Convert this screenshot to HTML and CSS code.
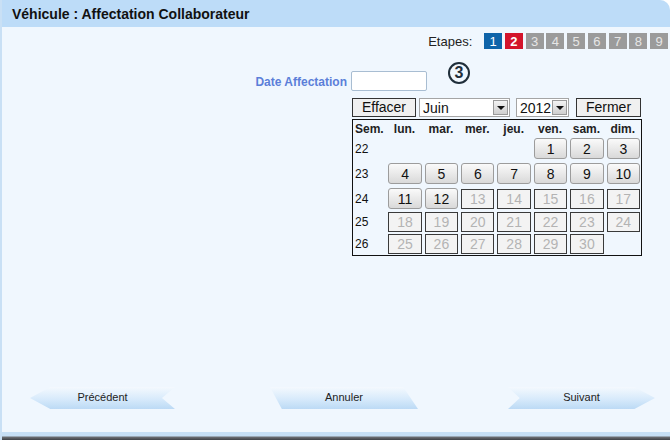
FILE: index.html
```html
<!DOCTYPE html>
<html lang="fr">
<head>
<meta charset="utf-8">
<title>Véhicule : Affectation Collaborateur</title>
<link rel="stylesheet" href="styles.css">
</head>
<body>
<div class="window">
  <div class="titlebar">Véhicule : Affectation Collaborateur</div>
  <div class="content">
    <div class="steps">
      <span class="steps-label">Etapes:</span>
      <span class="step step-done">1</span>
      <span class="step step-current">2</span>
      <span class="step">3</span>
      <span class="step">4</span>
      <span class="step">5</span>
      <span class="step">6</span>
      <span class="step">7</span>
      <span class="step">8</span>
      <span class="step">9</span>
    </div>
    <div class="field-row">
      <label class="field-label">Date Affectation</label>
      <input class="field-input" type="text">
      <span class="circle-num">3</span>
    </div>
    <div class="calendar">
      <div class="cal-top">
        <button class="cal-btn btn-clear">Effacer</button>
        <div class="cal-select sel-month"><span>Juin</span><span class="sel-arrow"></span></div>
        <div class="cal-select sel-year"><span>2012</span><span class="sel-arrow"></span></div>
        <button class="cal-btn btn-close">Fermer</button>
      </div>
      <table class="cal-table">
        <thead>
          <tr><th class="wk">Sem.</th><th>lun.</th><th>mar.</th><th>mer.</th><th>jeu.</th><th>ven.</th><th>sam.</th><th>dim.</th></tr>
        </thead>
        <tbody>
          <tr><td class="wk">22</td><td></td><td></td><td></td><td></td><td><span class="day">1</span></td><td><span class="day">2</span></td><td><span class="day">3</span></td></tr>
          <tr><td class="wk">23</td><td><span class="day">4</span></td><td><span class="day">5</span></td><td><span class="day">6</span></td><td><span class="day">7</span></td><td><span class="day">8</span></td><td><span class="day">9</span></td><td><span class="day">10</span></td></tr>
          <tr><td class="wk">24</td><td><span class="day">11</span></td><td><span class="day">12</span></td><td><span class="day off">13</span></td><td><span class="day off">14</span></td><td><span class="day off">15</span></td><td><span class="day off">16</span></td><td><span class="day off">17</span></td></tr>
          <tr class="row-off"><td class="wk">25</td><td><span class="day off">18</span></td><td><span class="day off">19</span></td><td><span class="day off">20</span></td><td><span class="day off">21</span></td><td><span class="day off">22</span></td><td><span class="day off">23</span></td><td><span class="day off">24</span></td></tr>
          <tr class="row-off"><td class="wk">26</td><td><span class="day off">25</span></td><td><span class="day off">26</span></td><td><span class="day off">27</span></td><td><span class="day off">28</span></td><td><span class="day off">29</span></td><td><span class="day off">30</span></td><td></td></tr>
        </tbody>
      </table>
    </div>
    <div class="nav">
      <div class="nav-btn nav-prev">Précédent</div>
      <div class="nav-btn nav-cancel">Annuler</div>
      <div class="nav-btn nav-next">Suivant</div>
    </div>
  </div>
  <div class="bottom-band"></div>
</div>
</body>
</html>
```
FILE: styles.css
```css
html, body {
  margin: 0;
  padding: 0;
  background: #ffffff;
}
body {
  font-family: "Liberation Sans", Arial, sans-serif;
  color: #111;
}
.window {
  width: 670px;
  height: 440px;
  display: flex;
  flex-direction: column;
  background: #f0f7fe;
  border-top-right-radius: 10px;
  overflow: hidden;
  box-sizing: border-box;
  border-left: 2px solid #c9e0f5;
}
.titlebar {
  height: 27px;
  line-height: 28px;
  background: #bddcf8;
  font-weight: bold;
  font-size: 14px;
  padding-left: 10px;
  color: #111;
}
.content {
  flex: 1;
  display: flex;
  flex-direction: column;
}
.steps {
  display: flex;
  justify-content: flex-end;
  align-items: center;
  gap: 2.75px;
  padding-top: 6px;
  padding-right: 2px;
  height: 16px;
}
.steps-label {
  font-size: 13px;
  color: #222;
  margin-right: 9px;
}
.step {
  width: 18px;
  height: 16px;
  line-height: 17px;
  text-align: center;
  font-size: 13px;
  color: #e6e6e6;
  background: #9b9b9b;
}
.step-done { background: #0f64a9; color: #fff; }
.step-current { background: #d3152c; color: #fff; font-weight: bold; }
.field-row {
  display: flex;
  align-items: flex-start;
  margin-top: 13px;
  height: 36px;
}
.field-label {
  width: 345px;
  text-align: right;
  font-size: 12px;
  font-weight: bold;
  color: #5b7fd9;
  margin-top: 13px;
}
.field-input {
  margin: 9px 0 0 4px;
  width: 76px;
  height: 20px;
  box-sizing: border-box;
  border: 1px solid #a8bdd2;
  border-radius: 2px;
  background: #fff;
  padding: 0;
}
.circle-num {
  margin-left: 21px;
  width: 22px;
  height: 22px;
  box-sizing: border-box;
  border: 2px solid #1f2e3a;
  border-radius: 50%;
  text-align: center;
  font-weight: bold;
  font-size: 16px;
  line-height: 18px;
  color: #1f2e3a;
}
.calendar {
  margin-left: 350px;
  width: 290px;
}
.cal-top {
  display: flex;
  align-items: center;
  height: 19px;
}
.cal-btn {
  font-family: "Liberation Sans", Arial, sans-serif;
  font-size: 14px;
  height: 19px;
  padding: 0;
  background: #f0f0f0;
  border: 1px solid #333;
  color: #111;
  line-height: 17px;
}
.btn-clear { width: 64px; }
.btn-close { width: 65px; margin-left: 7px; }
.cal-select {
  height: 19px;
  box-sizing: border-box;
  background: #fff;
  border: 1px solid #a5a5a5;
  display: flex;
  align-items: center;
  justify-content: space-between;
  font-size: 14px;
  padding-left: 3px;
  padding-right: 1px;
}
.sel-month { width: 91px; margin-left: 3px; }
.sel-year { width: 53px; margin-left: 6px; }
.sel-arrow {
  width: 15px;
  height: 15px;
  box-sizing: border-box;
  border: 1px solid #9a9a9a;
  background: linear-gradient(#f3f3f3, #cfcfcf);
  position: relative;
}
.sel-arrow::after {
  content: "";
  position: absolute;
  left: 3px;
  top: 5px;
  border-left: 4px solid transparent;
  border-right: 4px solid transparent;
  border-top: 4px solid #111;
}
.cal-table {
  margin-top: 2px;
  border: 1px solid #111;
  border-collapse: separate;
  border-spacing: 0;
  width: 290px;
}
.cal-table th {
  font-size: 12px;
  font-weight: bold;
  color: #222;
  height: 15px;
  padding: 1px 0 0;
  text-align: center;
  width: 36px;
}
.cal-table th.wk, .cal-table td.wk {
  width: 30px;
  text-align: left;
  padding-left: 2px;
  font-size: 12px;
}
.cal-table td {
  padding: 2px 1px 2px 2px;
  height: 21px;
  font-size: 12px;
  color: #111;
}
.cal-table tr.row-off td {
  padding-top: 1px;
  padding-bottom: 1px;
  height: 20px;
}
.day {
  display: block;
  height: 21px;
  line-height: 20px;
  box-sizing: border-box;
  text-align: center;
  font-size: 14px;
  color: #111;
  border: 1px solid #9c9c9c;
  border-radius: 3px;
  background: linear-gradient(#fafafa, #d9d9d9);
}
.day.off {
  height: 20px;
  line-height: 18px;
  color: #b3b3b3;
  border: 1px solid #3a3a3a;
  border-radius: 0;
  background: #f3f3f3;
}
.nav {
  margin-top: auto;
  margin-bottom: 23px;
  display: flex;
  align-items: center;
  height: 22px;
}
.nav-btn {
  height: 22px;
  line-height: 20px;
  font-size: 11px;
  color: #222;
  text-align: center;
  background: linear-gradient(#f4f9fe 0%, #d7eafb 55%, #bcdaf5 100%);
}
.nav-prev {
  width: 145px;
  margin-left: 28px;
  clip-path: polygon(0 50%, 14% 0, 100% 0, 91% 50%, 100% 100%, 14% 100%);
}
.nav-cancel {
  width: 148px;
  margin-left: 95px;
  clip-path: polygon(0 0, 90% 0, 100% 100%, 8% 100%);
}
.nav-next {
  width: 147px;
  margin-left: 90px;
  clip-path: polygon(0 0, 86% 0, 100% 50%, 86% 100%, 0 100%, 8% 50%);
}
.bottom-band {
  height: 8px;
  background: linear-gradient(#c6dff5 0, #c6dff5 4px, #6d7075 5px, #3e4146 8px);
}
```
